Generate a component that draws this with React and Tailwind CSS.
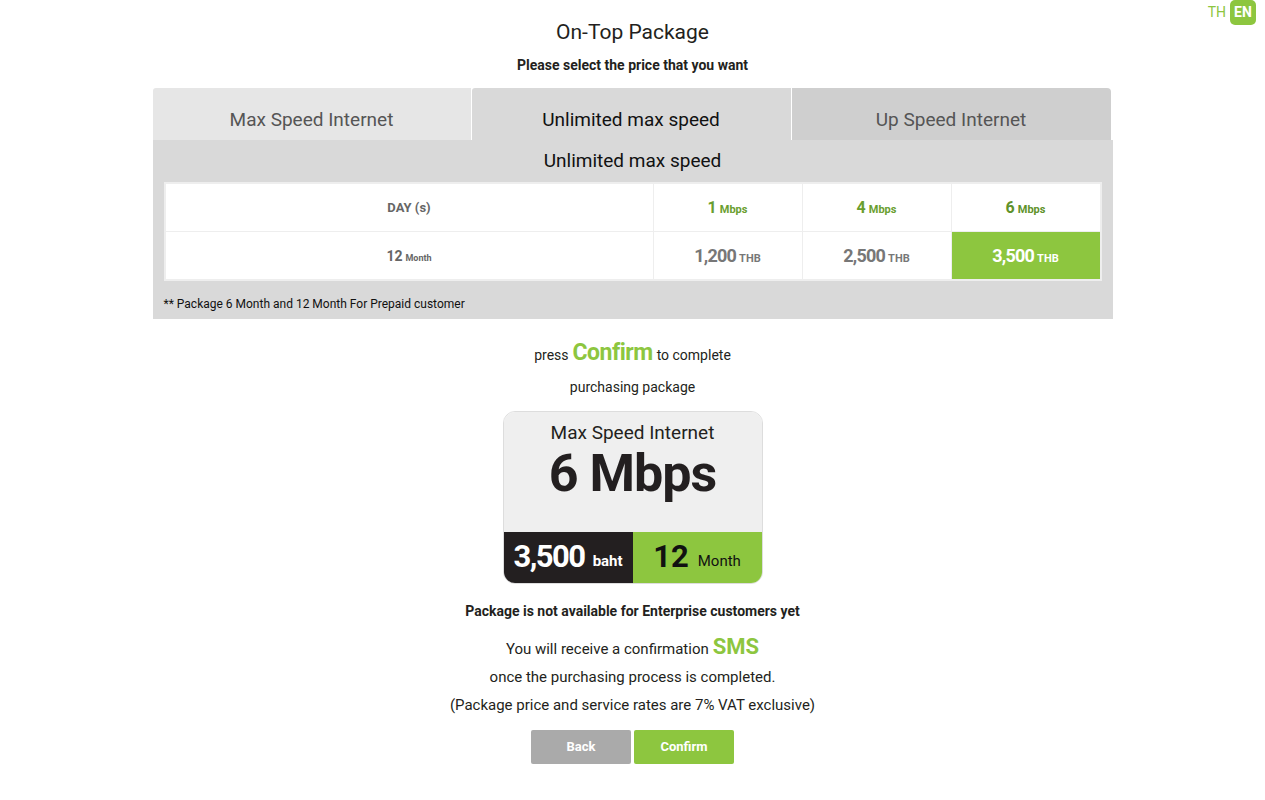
function Cell({ big, small, bigCls, smallCls, cls }) {
  return (
    <div className={"flex items-center justify-center font-bold " + cls}>
      <span>
        <span className={bigCls}>{big}</span>
        <span className={"ml-[3px] " + smallCls}>{small}</span>
      </span>
    </div>
  );
}

export default function App() {
  const font = { fontFamily: 'Roboto, "Liberation Sans", Arial, sans-serif' };
  return (
    <div className="relative min-h-[800px] bg-white text-[#231f20]" style={font}>
      <div className="absolute right-[9px] top-0 flex items-center gap-[4px] text-[14px]">
        <span className="text-[#8dc63f]">TH</span>
        <span className="flex h-[25px] w-[26px] items-center justify-center rounded-[5px] bg-[#8dc63f] font-bold text-white">EN</span>
      </div>
      <div className="flex flex-col items-center pt-[19px]">
        <h1 className="text-[21px] leading-[26px]">On-Top Package</h1>
        <p className="mt-[11px] text-[14px] font-bold leading-[18px]">Please select the price that you want</p>

        <div className="mt-[14px] w-[960px]">
          <div className="flex h-[52px]">
            <div className="flex w-[318px] items-center justify-center rounded-tl-[3px] bg-[#e6e6e6] pt-[12px] text-[19px] text-[#555]">Max Speed Internet</div>
            <div className="ml-[1px] flex w-[319px] items-center justify-center rounded-tl-[3px] bg-[#d9d9d9] pt-[12px] text-[19px] text-[#111]">Unlimited max speed</div>
            <div className="ml-[1px] flex w-[319px] items-center justify-center rounded-tr-[4px] bg-[#cfcfcf] pt-[12px] text-[19px] text-[#555]">Up Speed Internet</div>
          </div>
          <div className="bg-[#d9d9d9] px-[11px] pb-[7px]">
            <div className="flex h-[42px] items-center justify-center text-[19px] text-[#111]">Unlimited max speed</div>
            <div className="border-2 border-[#eeeeee] bg-white">
              <div className="grid grid-cols-[1fr_149px_149px_149px] text-[#666]">
                <div className="flex h-[48px] items-center justify-center border-b border-[#eee] text-[13px] font-bold">DAY (s)</div>
                <Cell big="1" small="Mbps" cls="h-[48px] border-b border-l border-[#eee] text-[#6a9e2f]" bigCls="text-[16px]" smallCls="text-[11px]" />
                <Cell big="4" small="Mbps" cls="h-[48px] border-b border-l border-[#eee] text-[#6a9e2f]" bigCls="text-[16px]" smallCls="text-[11px]" />
                <Cell big="6" small="Mbps" cls="h-[48px] border-b border-l border-[#eee] text-[#5f922a]" bigCls="text-[16px]" smallCls="text-[11px]" />
                <Cell big="12" small="Month" cls="h-[47px]" bigCls="text-[14px]" smallCls="text-[9px]" />
                <Cell big="1,200" small="THB" cls="h-[47px] border-l border-[#eee] text-[#777]" bigCls="text-[18px] tracking-[-0.8px]" smallCls="text-[11px]" />
                <Cell big="2,500" small="THB" cls="h-[47px] border-l border-[#eee] text-[#777]" bigCls="text-[18px] tracking-[-0.8px]" smallCls="text-[11px]" />
                <Cell big="3,500" small="THB" cls="h-[47px] border-l border-[#eee] bg-[#8dc63f] text-white" bigCls="text-[18px] tracking-[-0.8px]" smallCls="text-[11px]" />
              </div>
            </div>
            <p className="mt-[15px] text-[12px] leading-[16px] text-[#111]">** Package 6 Month and 12 Month For Prepaid customer</p>
          </div>
        </div>

        <p className="mt-[21px] flex items-baseline text-[14px] leading-[26px]">
          press<span className="mx-[4px] text-[23px] font-bold tracking-[-0.5px] text-[#8dc63f]">Confirm</span>to complete
        </p>
        <p className="mt-[10px] text-[14px] leading-[18px]">purchasing package</p>

        <div className="mt-[15px] w-[260px] overflow-hidden rounded-[12px] border border-[#ddd]">
          <div className="flex h-[120px] flex-col items-center bg-[#efefef] pt-[9px]">
            <div className="text-[19px] leading-[24px]">Max Speed Internet</div>
            <div className="mt-[1px] text-[52px] font-bold leading-[56px] tracking-[-1px]">6 Mbps</div>
          </div>
          <div className="flex h-[51px]">
            <div className="flex w-[130px] items-center justify-center bg-[#231f20] text-white">
              <span className="text-[31px] font-bold tracking-[-1.5px]">3,500</span>
              <span className="ml-[8px] mt-[8px] text-[15px] font-bold">baht</span>
            </div>
            <div className="flex w-[130px] items-center justify-center bg-[#8dc63f] text-[#111]">
              <span className="text-[31px] font-bold">12</span>
              <span className="ml-[9px] mt-[8px] text-[15px]">Month</span>
            </div>
          </div>
        </div>

        <p className="mt-[18px] text-[14px] font-bold leading-[18px]">Package is not available for Enterprise customers yet</p>
        <p className="mt-[15px] flex items-baseline text-[15px] leading-[24px]">
          You will receive a confirmation<span className="ml-[4px] text-[22px] font-bold text-[#8dc63f]">SMS</span>
        </p>
        <p className="mt-[6px] text-[15px] leading-[20px]">once the purchasing process is completed.</p>
        <p className="mt-[8px] text-[15px] leading-[20px]">(Package price and service rates are 7% VAT exclusive)</p>

        <div className="mt-[15px] flex gap-[3px]">
          <button className="h-[34px] w-[100px] rounded-[2px] bg-[#aaaaaa] text-[13px] font-bold text-white">Back</button>
          <button className="h-[34px] w-[100px] rounded-[2px] bg-[#8dc63f] text-[13px] font-bold text-white">Confirm</button>
        </div>
      </div>
    </div>
  );
}
